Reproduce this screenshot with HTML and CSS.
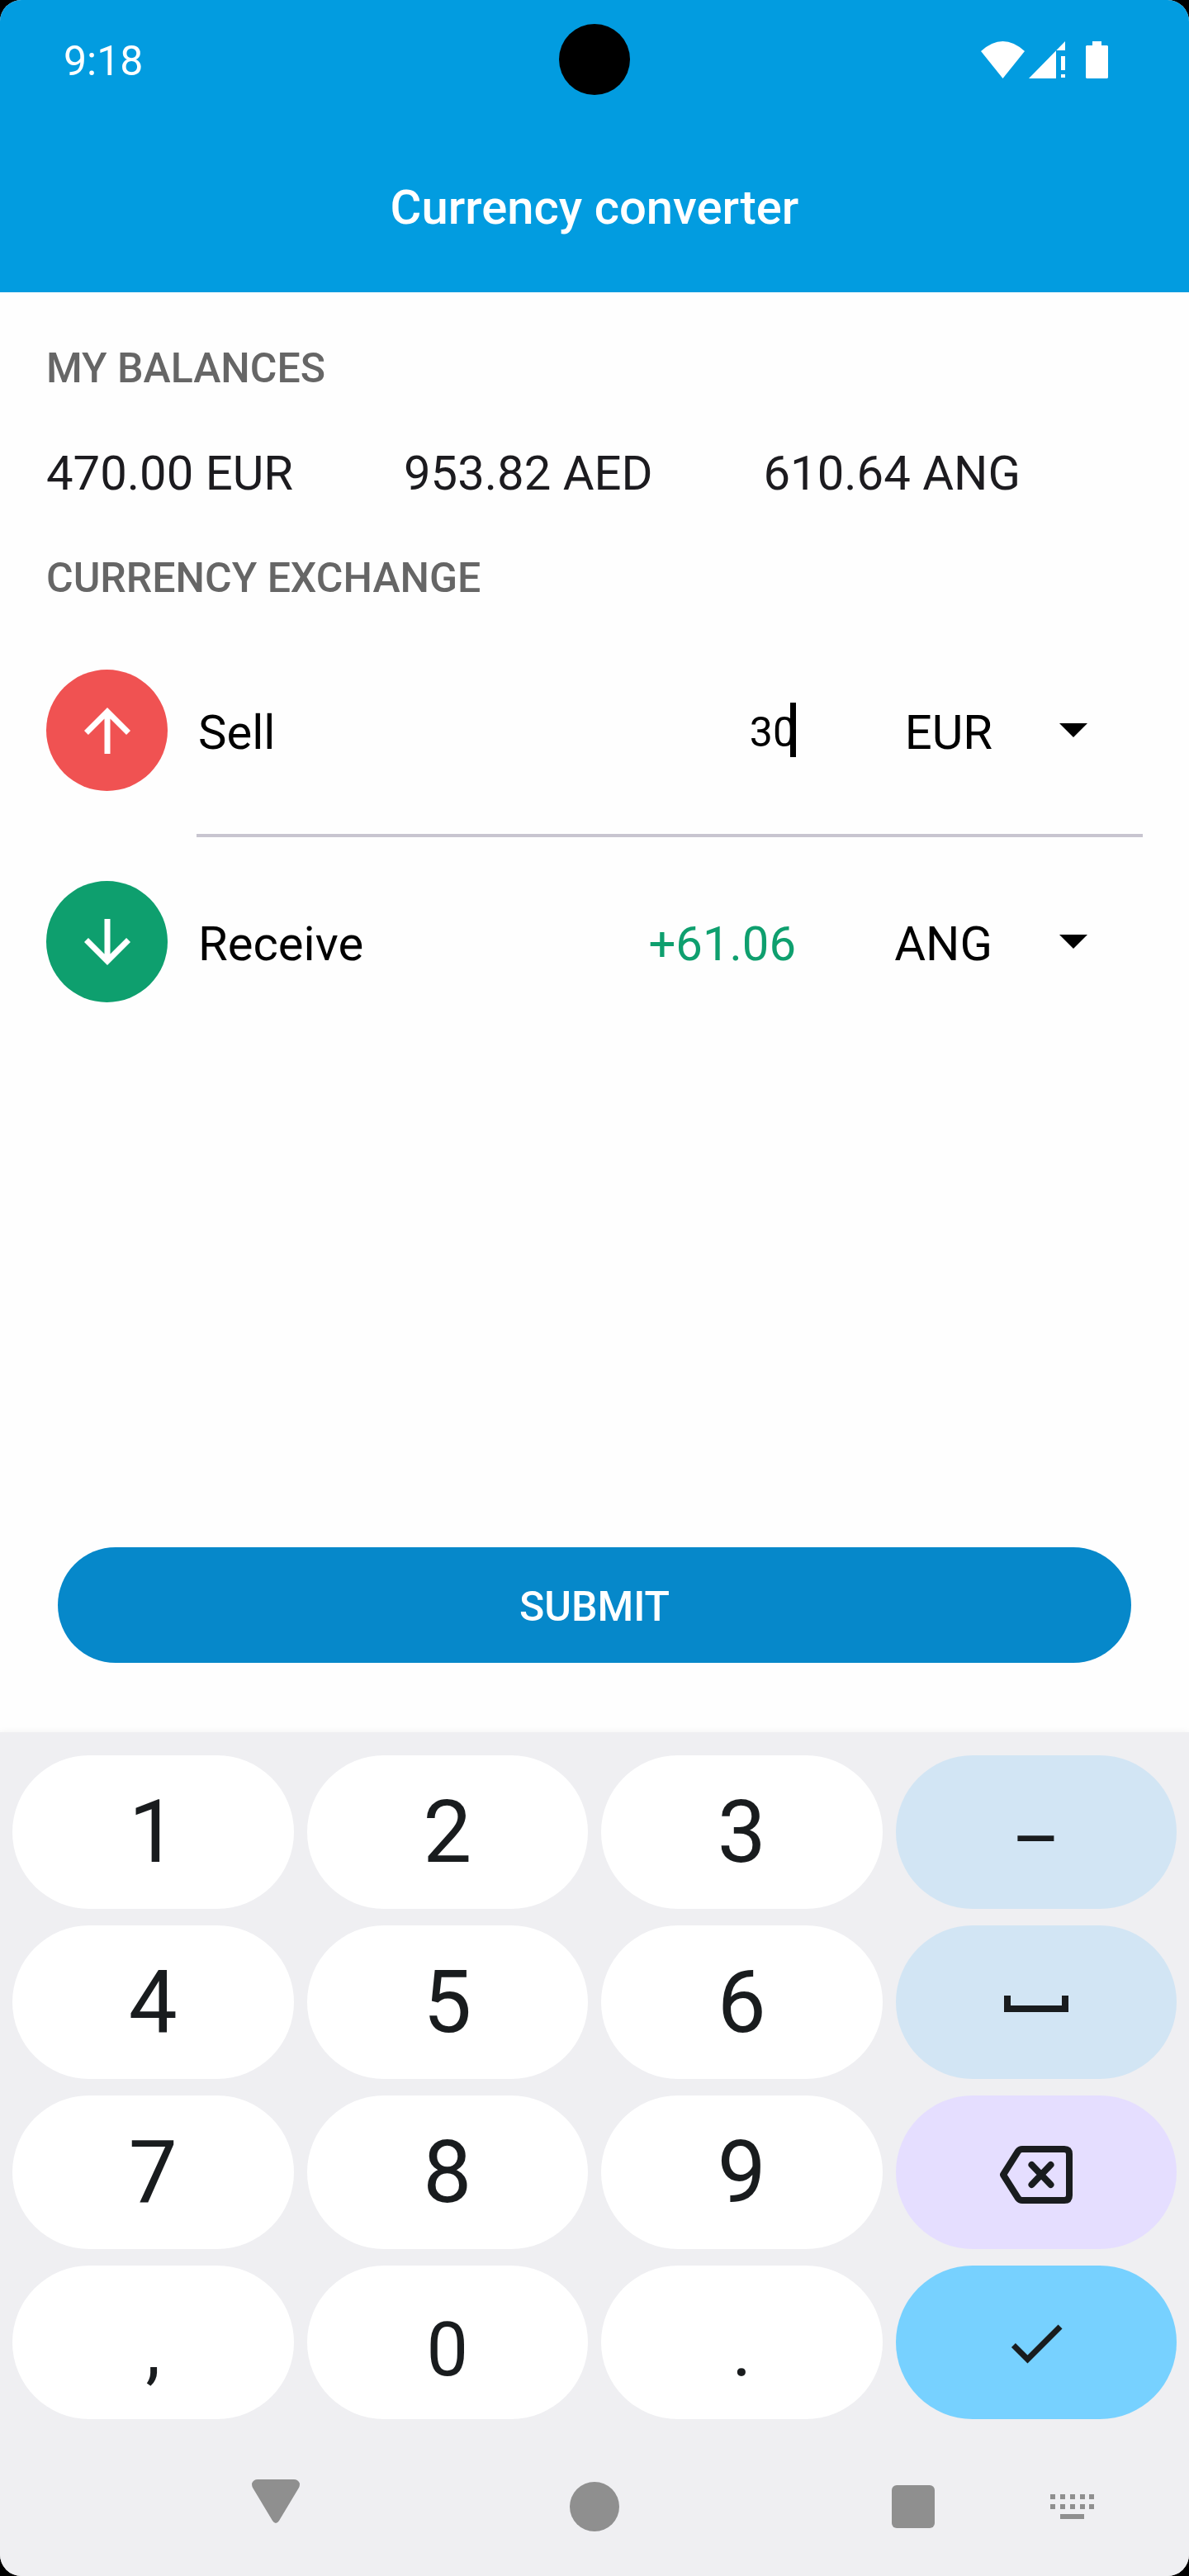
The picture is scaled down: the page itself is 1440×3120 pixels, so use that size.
FILE: index.html
```html
<!DOCTYPE html>
<html lang="en">
<head>
  <meta charset="utf-8">
  <meta name="viewport" content="width=device-width, initial-scale=1">
  <title>Currency converter</title>
  <link rel="stylesheet" href="styles.css">
</head>
<body>
  <div class="screen">
    <header class="header">
      <div class="status">
        <span class="status-time">9:18</span>
        <span class="camera"></span>
        <div class="status-icons">
          <svg class="wifi" viewBox="0 0 53 45" aria-hidden="true"><path d="M0 12Q26.500-12 53 12L26.500 45Z"/></svg>
          <svg class="signal" viewBox="0 0 44 45" aria-hidden="true"><path d="M44 0V11H33V45H0ZM39 18h5v17h-5ZM39 40h5v4h-5Z"/></svg>
          <svg class="battery" viewBox="0 0 27 45" aria-hidden="true"><path d="M8 0H19V5H26L27 6V44L26 45H1L0 44V6L1 5H8Z"/></svg>
        </div>
      </div>
      <h1 class="title">Currency converter</h1>
    </header>

    <main class="main">
      <h2 class="section-title">MY BALANCES</h2>
      <ul class="balances">
        <li>470.00 EUR</li>
        <li>953.82 AED</li>
        <li>610.64 ANG</li>
      </ul>
      <h2 class="section-title">CURRENCY EXCHANGE</h2>

      <form class="exchange">
        <div class="row">
          <span class="badge badge-sell">
            <svg viewBox="0 0 24 24" aria-hidden="true"><path d="M4 12l1.410 1.410L11 7.830V20h2V7.830l5.580 5.590L20 12l-8-8-8 8z"/></svg>
          </span>
          <label class="row-label" for="sell">Sell</label>
          <div class="field">
            <input class="amount-input" id="sell" type="text" inputmode="decimal" value="30">
            <span class="caret"></span>
          </div>
          <div class="currency">
            <select class="currency-select" aria-label="Sell currency">
              <option selected>EUR</option><option>AED</option><option>ANG</option>
            </select>
            <svg class="drop" viewBox="0 0 34 17" aria-hidden="true"><path d="M0 0H34L17 17Z"/></svg>
          </div>
        </div>
        <hr class="divider">
        <div class="row">
          <span class="badge badge-receive">
            <svg viewBox="0 0 24 24" aria-hidden="true"><path d="M20 12l-1.410-1.410L13 16.170V4h-2v12.170l-5.580-5.590L4 12l8 8 8-8z"/></svg>
          </span>
          <label class="row-label" for="receive">Receive</label>
          <output class="received" id="receive">+61.06</output>
          <div class="currency">
            <select class="currency-select" aria-label="Receive currency">
              <option>EUR</option><option>AED</option><option selected>ANG</option>
            </select>
            <svg class="drop" viewBox="0 0 34 17" aria-hidden="true"><path d="M0 0H34L17 17Z"/></svg>
          </div>
        </div>
        <button class="submit" type="button">SUBMIT</button>
      </form>
    </main>

    <section class="keyboard" aria-label="Keyboard">
      <div class="keys">
        <button class="key" type="button">1</button>
        <button class="key" type="button">2</button>
        <button class="key" type="button">3</button>
        <button class="key key-tonal key-small" type="button">–</button>
        <button class="key" type="button">4</button>
        <button class="key" type="button">5</button>
        <button class="key" type="button">6</button>
        <button class="key key-tonal" type="button" aria-label="Space">
          <svg class="icon-space" viewBox="0 0 78 22" aria-hidden="true"><path d="M4 2V18H74V2"/></svg>
        </button>
        <button class="key" type="button">7</button>
        <button class="key" type="button">8</button>
        <button class="key" type="button">9</button>
        <button class="key key-delete" type="button" aria-label="Backspace">
          <svg class="icon-backspace" viewBox="0 0 88 70" aria-hidden="true"><path d="M4 35L22 6.500Q24 4 27 4H78Q84 4 84 10V60Q84 66 78 66H27Q24 66 22 63.500Z"/><path d="M38.500 23L61.500 47M61.500 23L38.500 47"/></svg>
        </button>
        <button class="key key-small" type="button">,</button>
        <button class="key key-small" type="button">0</button>
        <button class="key key-small" type="button">.</button>
        <button class="key key-enter" type="button" aria-label="Done">
          <svg class="icon-done" viewBox="0 0 24 24" aria-hidden="true"><path d="M9 16.170L4.830 12l-1.420 1.410L9 19 21 7l-1.410-1.410z"/></svg>
        </button>
      </div>
      <nav class="nav">
        <button class="nav-button nav-back" type="button" aria-label="Hide keyboard">
          <svg viewBox="0 0 58 53" aria-hidden="true"><path d="M7 0H51Q56 0 58 5Q58 8 57 10L33 50Q29 56 25 50L1 10Q0 8 0 5Q2 0 7 0Z"/></svg>
        </button>
        <button class="nav-button nav-home" type="button" aria-label="Home">
          <svg viewBox="0 0 60 60" aria-hidden="true"><circle cx="30" cy="30" r="30"/></svg>
        </button>
        <button class="nav-button nav-recent" type="button" aria-label="Recent apps">
          <svg viewBox="0 0 52 52" aria-hidden="true"><rect width="52" height="52" rx="6"/></svg>
        </button>
        <button class="nav-button nav-ime" type="button" aria-label="Switch keyboard">
          <svg viewBox="0 0 54 30" aria-hidden="true"><path d="M0 0h6v6H0ZM12 0h6v6h-6ZM24 0h6v6h-6ZM36 0h6v6h-6ZM47 0h6v6h-6ZM0 12h6v6H0ZM12 12h6v6h-6ZM24 12h6v6h-6ZM36 12h6v6h-6ZM47 12h6v6h-6ZM12 24h29v6H12Z"/></svg>
        </button>
      </nav>
    </section>
  </div>
</body>
</html>
```
FILE: styles.css
```css
* {
  box-sizing: border-box;
}

body {
  margin: 0;
  background: #000;
  font-family: Roboto, "Liberation Sans", sans-serif;
  font-size: 58px;
  line-height: 68px;
  color: #000;
}

button,
input,
select {
  font: inherit;
  color: inherit;
  border: 0;
  margin: 0;
  padding: 0;
  background: none;
  outline: none;
}

svg {
  display: block;
}

.screen {
  display: flex;
  flex-direction: column;
  min-height: 100vh;
  border-radius: 26px;
  overflow: hidden;
  background: #fefefe;
}

/* Header */
.header {
  background: #029ce0;
  color: #fff;
}

.status {
  display: grid;
  grid-template-columns: 1fr auto 1fr;
  align-items: center;
  height: 144px;
  padding: 0 98px 0 77px;
  font-size: 50px;
}

.status-time {
  padding-top: 4px;
}

.camera {
  width: 86px;
  height: 86px;
  margin-left: 21px;
  border-radius: 50%;
  background: #000;
}

.status-icons {
  display: flex;
  justify-content: flex-end;
  fill: #fff;
}

.wifi {
  width: 53px;
  height: 45px;
}

.signal {
  width: 44px;
  height: 45px;
  margin: 0 25px 0 5px;
}

.battery {
  width: 27px;
  height: 45px;
}

.title {
  margin: 0;
  padding: 73px 0 69px;
  font-size: 58px;
  font-weight: 500;
  text-align: center;
}

/* Content */
.main {
  display: flex;
  flex: 1;
  flex-direction: column;
  padding: 64px 56px 84px;
}

.section-title {
  margin: 0;
  font-size: 50px;
  line-height: 56px;
  font-weight: 500;
  color: #666;
}

.balances {
  display: flex;
  gap: 134px;
  margin: 0;
  padding: 65px 0;
  list-style: none;
  color: #1c1b1f;
}

.exchange {
  display: flex;
  flex: 1;
  flex-direction: column;
  padding-top: 83px;
}

.row {
  display: grid;
  grid-template-columns: 147px 1fr 1fr 420px;
  align-items: center;
}

.badge {
  display: grid;
  place-items: center;
  width: 147px;
  height: 147px;
  border-radius: 50%;
}

.badge svg {
  width: 84px;
  height: 84px;
  fill: #fff;
}

.badge-sell {
  background: #f05252;
}

.badge-receive {
  background: #0e9f6e;
}

.row-label {
  padding: 4px 0 0 37px;
}

.field {
  position: relative;
}

.amount-input {
  display: block;
  width: 100%;
  padding-top: 4px;
  font-size: 50px;
  text-align: right;
}

.caret {
  position: absolute;
  top: 2px;
  right: 0;
  width: 7px;
  height: 66px;
  background: #000;
}

.received {
  padding-top: 4px;
  text-align: right;
  color: #0e9f6e;
}

.currency {
  display: grid;
  align-items: center;
}

.currency-select {
  grid-area: 1 / 1;
  width: 100%;
  padding: 4px 182px 0 0;
  appearance: none;
  text-align: right;
  text-align-last: right;
}

.drop {
  grid-area: 1 / 1;
  justify-self: end;
  width: 34px;
  height: 17px;
  margin-right: 67px;
  pointer-events: none;
}

.divider {
  width: auto;
  height: 4px;
  margin: 52px 0 53px 182px;
  border: 0;
  background: #c8c5d0;
}

.submit {
  height: 140px;
  margin: auto 14px 0;
  padding-top: 4px;
  border-radius: 70px;
  background: #0688ca;
  color: #fff;
  font-size: 50px;
  font-weight: 500;
}

/* On-screen keyboard */
.keyboard {
  background: #efeff2;
  box-shadow: 0 0 8px rgba(0, 0, 0, 0.06);
}

.keys {
  display: grid;
  grid-template-columns: repeat(4, 1fr);
  gap: 20px 16px;
  padding: 28px 15px 0;
}

.key {
  display: grid;
  place-items: center;
  height: 186px;
  border-radius: 93px;
  background: #fff;
  color: #191c1e;
  font-size: 105px;
  line-height: 124px;
  padding-top: 2px;
}

.key-small {
  padding-top: 20px;
  font-size: 90px;
}

.key-tonal {
  background: #d2e5f4;
}

.key-delete {
  background: #e5deff;
}

.key-enter {
  background: #77d1ff;
}

.icon-space {
  width: 78px;
  height: 22px;
  fill: none;
  stroke: #191c1e;
  stroke-width: 8px;
}

.icon-backspace {
  width: 88px;
  height: 70px;
  margin-top: 4px;
  fill: none;
  stroke: #191c1e;
  stroke-width: 8px;
  stroke-linecap: round;
  stroke-linejoin: round;
}

.icon-done {
  width: 84px;
  height: 84px;
  fill: #191c1e;
}

/* System navigation */
.nav {
  display: grid;
  grid-template-columns: repeat(6, 1fr);
  height: 190px;
  padding: 22px 45px 0 238px;
  align-items: center;
}

.nav-button {
  display: grid;
  place-items: center;
  height: 120px;
  fill: #8f8f8f;
}

.nav-back {
  grid-column: 1;
  padding-bottom: 14px;
}

.nav-back svg {
  width: 58px;
  height: 53px;
}

.nav-home {
  grid-column: 3;
}

.nav-home svg {
  width: 60px;
  height: 60px;
}

.nav-recent {
  grid-column: 5;
}

.nav-recent svg {
  width: 52px;
  height: 52px;
}

.nav-ime {
  grid-column: 6;
}

.nav-ime svg {
  width: 54px;
  height: 30px;
}
```
